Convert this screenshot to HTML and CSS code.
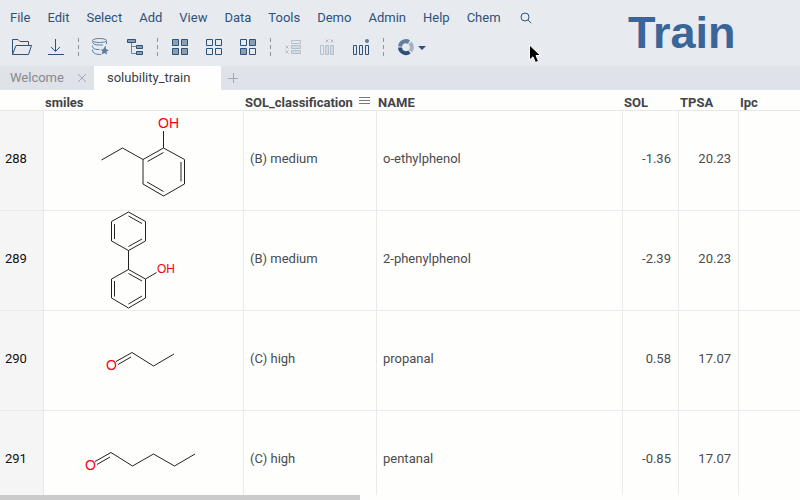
FILE: index.html
```html
<!DOCTYPE html>
<html lang="en">
<head>
<meta charset="utf-8">
<title>solubility_train</title>
<link rel="stylesheet" href="styles.css">
</head>
<body>
<div class="app">
  <header class="ribbon">
    <div class="ribbon-main">
      <nav class="menu" aria-label="Main menu">
        <a href="#">File</a><a href="#">Edit</a><a href="#">Select</a><a href="#">Add</a><a href="#">View</a><a href="#">Data</a><a href="#">Tools</a><a href="#">Demo</a><a href="#">Admin</a><a href="#">Help</a><a href="#">Chem</a>
        <button class="search" aria-label="Search"><svg width="14" height="14" viewBox="519 11 14 14"><circle cx="525" cy="17" r="4"/><path d="M528 20l3.200 3.200"/></svg></button>
      </nav>
      <div class="toolbar">
        <button class="tool" aria-label="Open"><svg viewBox="5 35 34 24"><path d="M12.500 54.500V39.500H18L20 41.500H28.500V45.500M12.500 54.500L16 45.500H31.500L28.500 54.500Z"/></svg></button>
        <button class="tool" aria-label="Download"><svg viewBox="39 35 34 24"><path d="M55.500 39V51M51 47L55.500 51.500L60 47M48 54.500H64"/></svg></button>
        <span class="sep"></span>
        <button class="tool muted" aria-label="Database"><svg viewBox="84 35 34 24"><ellipse cx="99.500" cy="40.500" rx="7" ry="2"/><path d="M92.500 41.500C92.500 45.500 99 45 103 45M106.500 41.500V44M92.500 45.500C92.500 49.500 96 49.500 99.500 49.500M92.500 49.500C92.500 54 97 54.500 101 54.500"/><path class="solid" d="M100.500 49.500L103 49.500L105.500 45.500L106 49L109 50.500L106.500 51.500L107 54.500L104.500 53L101.500 54.500L102.500 51.500Z"/></svg></button>
        <button class="tool" aria-label="Hierarchy"><svg viewBox="118 35 34 24"><path class="line" d="M131.500 42V53.500H137M131.500 46.500H137"/><path class="fill" d="M127.500 39.500h8v3h-8zM136.500 45.500h6v3h-6zM136.500 51.500h6v3h-6z"/></svg></button>
        <span class="sep"></span>
        <button class="tool" aria-label="Select all"><svg viewBox="163 35 34 24"><path class="fill" d="M172.500 39.500h6v6h-6zM181.500 39.500h6v6h-6zM172.500 48.500h6v6h-6zM181.500 48.500h6v6h-6z"/></svg></button>
        <button class="tool" aria-label="Select none"><svg viewBox="197 35 34 24"><path d="M206.500 39.500h6v6h-6zM215.500 39.500h6v6h-6zM206.500 48.500h6v6h-6zM215.500 48.500h6v6h-6z"/></svg></button>
        <button class="tool" aria-label="Invert selection"><svg viewBox="231 35 34 24"><path d="M240.500 39.500h6v6h-6zM249.500 48.500h6v6h-6z"/><path class="fill" d="M249.500 39.500h6v6h-6zM240.500 48.500h6v6h-6z"/></svg></button>
        <span class="sep"></span>
        <button class="tool disabled" aria-label="Remove rows"><svg viewBox="276 35 34 24"><path d="M291.500 40.500h9v3h-9z"/><path class="fill" d="M291.500 45.500h9v3h-9zM291.500 50.500h9v3h-9z"/><path d="M285.500 45.500l3 3m0-3l-3 3M285.500 50.500l3 3m0-3l-3 3"/></svg></button>
        <button class="tool disabled" aria-label="Remove columns"><svg viewBox="310 35 34 24"><path d="M320.500 45.500h3v9h-3z"/><path class="fill" d="M325.500 45.500h3v9h-3zM330.500 45.500h3v9h-3z"/><path d="M325.500 39.500l3 3m0-3l-3 3M330.500 39.500l3 3m0-3l-3 3"/></svg></button>
        <button class="tool" aria-label="Add column"><svg viewBox="344 35 34 24"><path d="M353.500 45.500h3v9h-3zM359.500 45.500h3v9h-3zM365.500 45.500h3v9h-3z"/><circle class="dot" cx="367" cy="41" r="2"/></svg></button>
        <span class="sep"></span>
        <button class="tool chart" aria-label="Add viewer"><svg viewBox="389 35 42 24"><path class="arc-dark" d="M400 47.500A6 6 0 0 0 409.500 52"/><path class="arc-mid" d="M400 46.500A6 6 0 0 1 409 42"/><path class="arc-light" d="M410 43A6 6 0 0 1 410.500 51"/><path class="caret" d="M418 46H426L422 50Z"/></svg></button>
      </div>
    </div>
    <h1>Train</h1>
  </header>
  <div class="tabs">
    <div class="tab"><a href="#">Welcome</a><button class="icon" aria-label="Close tab"><svg width="10" height="10" viewBox="0 0 10 10"><path d="M1 1l8 8M9 1l-8 8"/></svg></button></div>
    <div class="tab active"><a href="#">solubility_train</a></div>
    <button class="icon add" aria-label="New tab"><svg width="12" height="12" viewBox="0 0 12 12"><path d="M1 6.500h10M6.500 1v10"/></svg></button>
  </div>
  <main class="grid">
    <table>
      <colgroup><col class="c-row"><col class="c-smiles"><col class="c-class"><col class="c-name"><col class="c-sol"><col class="c-tpsa"><col></colgroup>
      <thead>
        <tr><th></th><th>smiles</th><th><div class="head"><span>SOL_classification</span><button class="icon menu-btn" aria-label="Column menu"><svg width="11" height="9" viewBox="0 0 11 9"><path d="M0 1.500h11M0 4.500h11M0 7.500h11"/></svg></button></div></th><th>NAME</th><th>SOL</th><th>TPSA</th><th>Ipc</th></tr>
      </thead>
      <tbody>
        <tr><td class="row">288</td><td class="mol"><svg viewBox="44 111 199 99"><path d="M101.500 160L122.500 148L143 159.500L163.500 148L184.500 159.500V184L163.500 196L143 184V159.500M163.500 148V131M147.500 161.500L163.500 152.500M181 162V181.500M147 182L163.500 191.500"/><text x="158" y="128">OH</text></svg></td><td>(B) medium</td><td>o-ethylphenol</td><td class="num">-1.36</td><td class="num">20.23</td><td></td></tr>
        <tr><td class="row">289</td><td class="mol"><svg viewBox="44 211 199 99"><path d="M128.500 212L145.500 221.500V241L128.500 250.500L111.500 241V221.500ZM128.500 216L142 223.500M128.500 246.500L142 239M114.500 224V239M128.500 250.500V269.500M128.500 269.500L145.500 279V298L128.500 308L111.500 298V279ZM145.500 279L156.500 272.500M128.500 273.500L142 281M142 296L128.500 304M114.500 281V296.500"/><text class="small" x="157" y="273">OH</text></svg></td><td>(B) medium</td><td>2-phenylphenol</td><td class="num">-2.39</td><td class="num">20.23</td><td></td></tr>
        <tr><td class="row">290</td><td class="mol"><svg viewBox="44 311 199 99"><path d="M116 361.500L132 352.500L153.500 366L174 354M118 364.500L131 357"/><text x="106" y="370">O</text></svg></td><td>(C) high</td><td>propanal</td><td class="num">0.58</td><td class="num">17.07</td><td></td></tr>
        <tr><td class="row">291</td><td class="mol"><svg viewBox="44 411 199 99"><path d="M95 461.500L111 452.500L132.500 466L153.500 454L174.500 466L195 454M97 464.500L110 457"/><text x="85" y="470">O</text></svg></td><td>(C) high</td><td>pentanal</td><td class="num">-0.85</td><td class="num">17.07</td><td></td></tr>
      </tbody>
    </table>
  </main>
  <div class="scroll"><div class="thumb"></div></div>
  <svg class="pointer" width="14" height="20" viewBox="0 0 14 20"><path d="M1.500 1V16L5 12.800L7.500 18.500L10.500 17.200L8 11.500H12.500Z"/></svg>
</div>
</body>
</html>
```
FILE: styles.css
```css
* { box-sizing: border-box; }
body { margin: 0; font: 13px/16px Roboto, "Liberation Sans", sans-serif; color: #4a4b4f; background: #fefefd; }
a { color: inherit; text-decoration: none; }
button { border: 0; padding: 0; background: none; color: inherit; font: inherit; }
svg { display: block; fill: none; stroke: currentColor; }
.app { position: relative; display: flex; flex-direction: column; height: 100vh; overflow: hidden; }

.ribbon { display: flex; flex: none; height: 66px; background: #e7ebef; color: #2e5178; }
.ribbon-main { width: 628px; }
.menu { display: flex; align-items: center; gap: 17px; height: 35px; padding-left: 10px; }
.search { margin-left: 1px; }
.toolbar { display: flex; padding-left: 5px; }
.tool { width: 34px; height: 24px; }
.tool svg { width: 100%; height: 24px; }
.chart { width: 42px; }
.muted { color: #5f7d9c; }
.disabled { color: #b3c0cc; }
.fill { fill: #8c9fb2; }
.disabled .fill { fill: #d2dae2; }
.solid { fill: #5f7d9c; stroke: none; }
.line { stroke: #6f87a0; }
.dot { fill: #5f7d9c; stroke: none; }
.arc-dark, .arc-mid, .arc-light { stroke-width: 4px; }
.arc-mid { stroke: #64809e; }
.arc-light { stroke: #a2b2c2; }
.caret { fill: currentColor; stroke: none; }
.sep { width: 1px; height: 19px; margin: 3px 5px 0; background: repeating-linear-gradient(#8d959e 0 4px, transparent 4px 7px); }
h1 { margin: 8px 0 0; font: bold 45px/50px "Liberation Sans", sans-serif; color: #3a6598; }

.tabs { display: flex; flex: none; height: 24px; background: #dfe2e8; }
.tab { display: flex; align-items: center; gap: 13px; width: 94px; padding-left: 10px; color: #87898e; }
.tab.active { width: 127px; padding-left: 13px; background: #fefefe; color: #3c3e42; }
.icon { color: #a4a8ae; }
.add { margin-left: 6px; }

.grid { flex: 1; min-height: 0; overflow: hidden; }
table { width: 100%; table-layout: fixed; border-collapse: separate; border-spacing: 0; }
.c-row { width: 44px; }
.c-smiles { width: 200px; }
.c-class { width: 133px; }
.c-name { width: 246px; }
.c-sol { width: 56px; }
.c-tpsa { width: 60px; }
th { height: 21px; padding: 4px 0 0 1px; border-bottom: 1px solid #e6e7e9; text-align: left; vertical-align: bottom; color: #434448; line-height: 15px; }
.head { display: flex; align-items: center; gap: 6px; }
.menu-btn { color: #77797e; margin-bottom: 4px; }
td { height: 100px; padding: 0 6px 4px; border: solid #e9eaec; border-width: 0 1px 1px 0; }
td:last-child { border-right: 0; }
.row { padding-left: 5px; background: #f5f5f6; color: #111; }
.num { padding-right: 7px; text-align: right; }
.mol { padding: 0; color: #222; }
.mol svg { width: 199px; height: 99px; stroke-width: 1px; }
.mol text { fill: #fc0010; stroke: none; font: 14px "Liberation Sans", sans-serif; }
.mol .small { font-size: 12px; }
.scroll { flex: none; height: 5px; }
.thumb { width: 45%; height: 5px; background: #cbcbcb; }
.pointer { position: absolute; left: 528px; top: 44px; fill: #000; stroke: #fff; }
```
